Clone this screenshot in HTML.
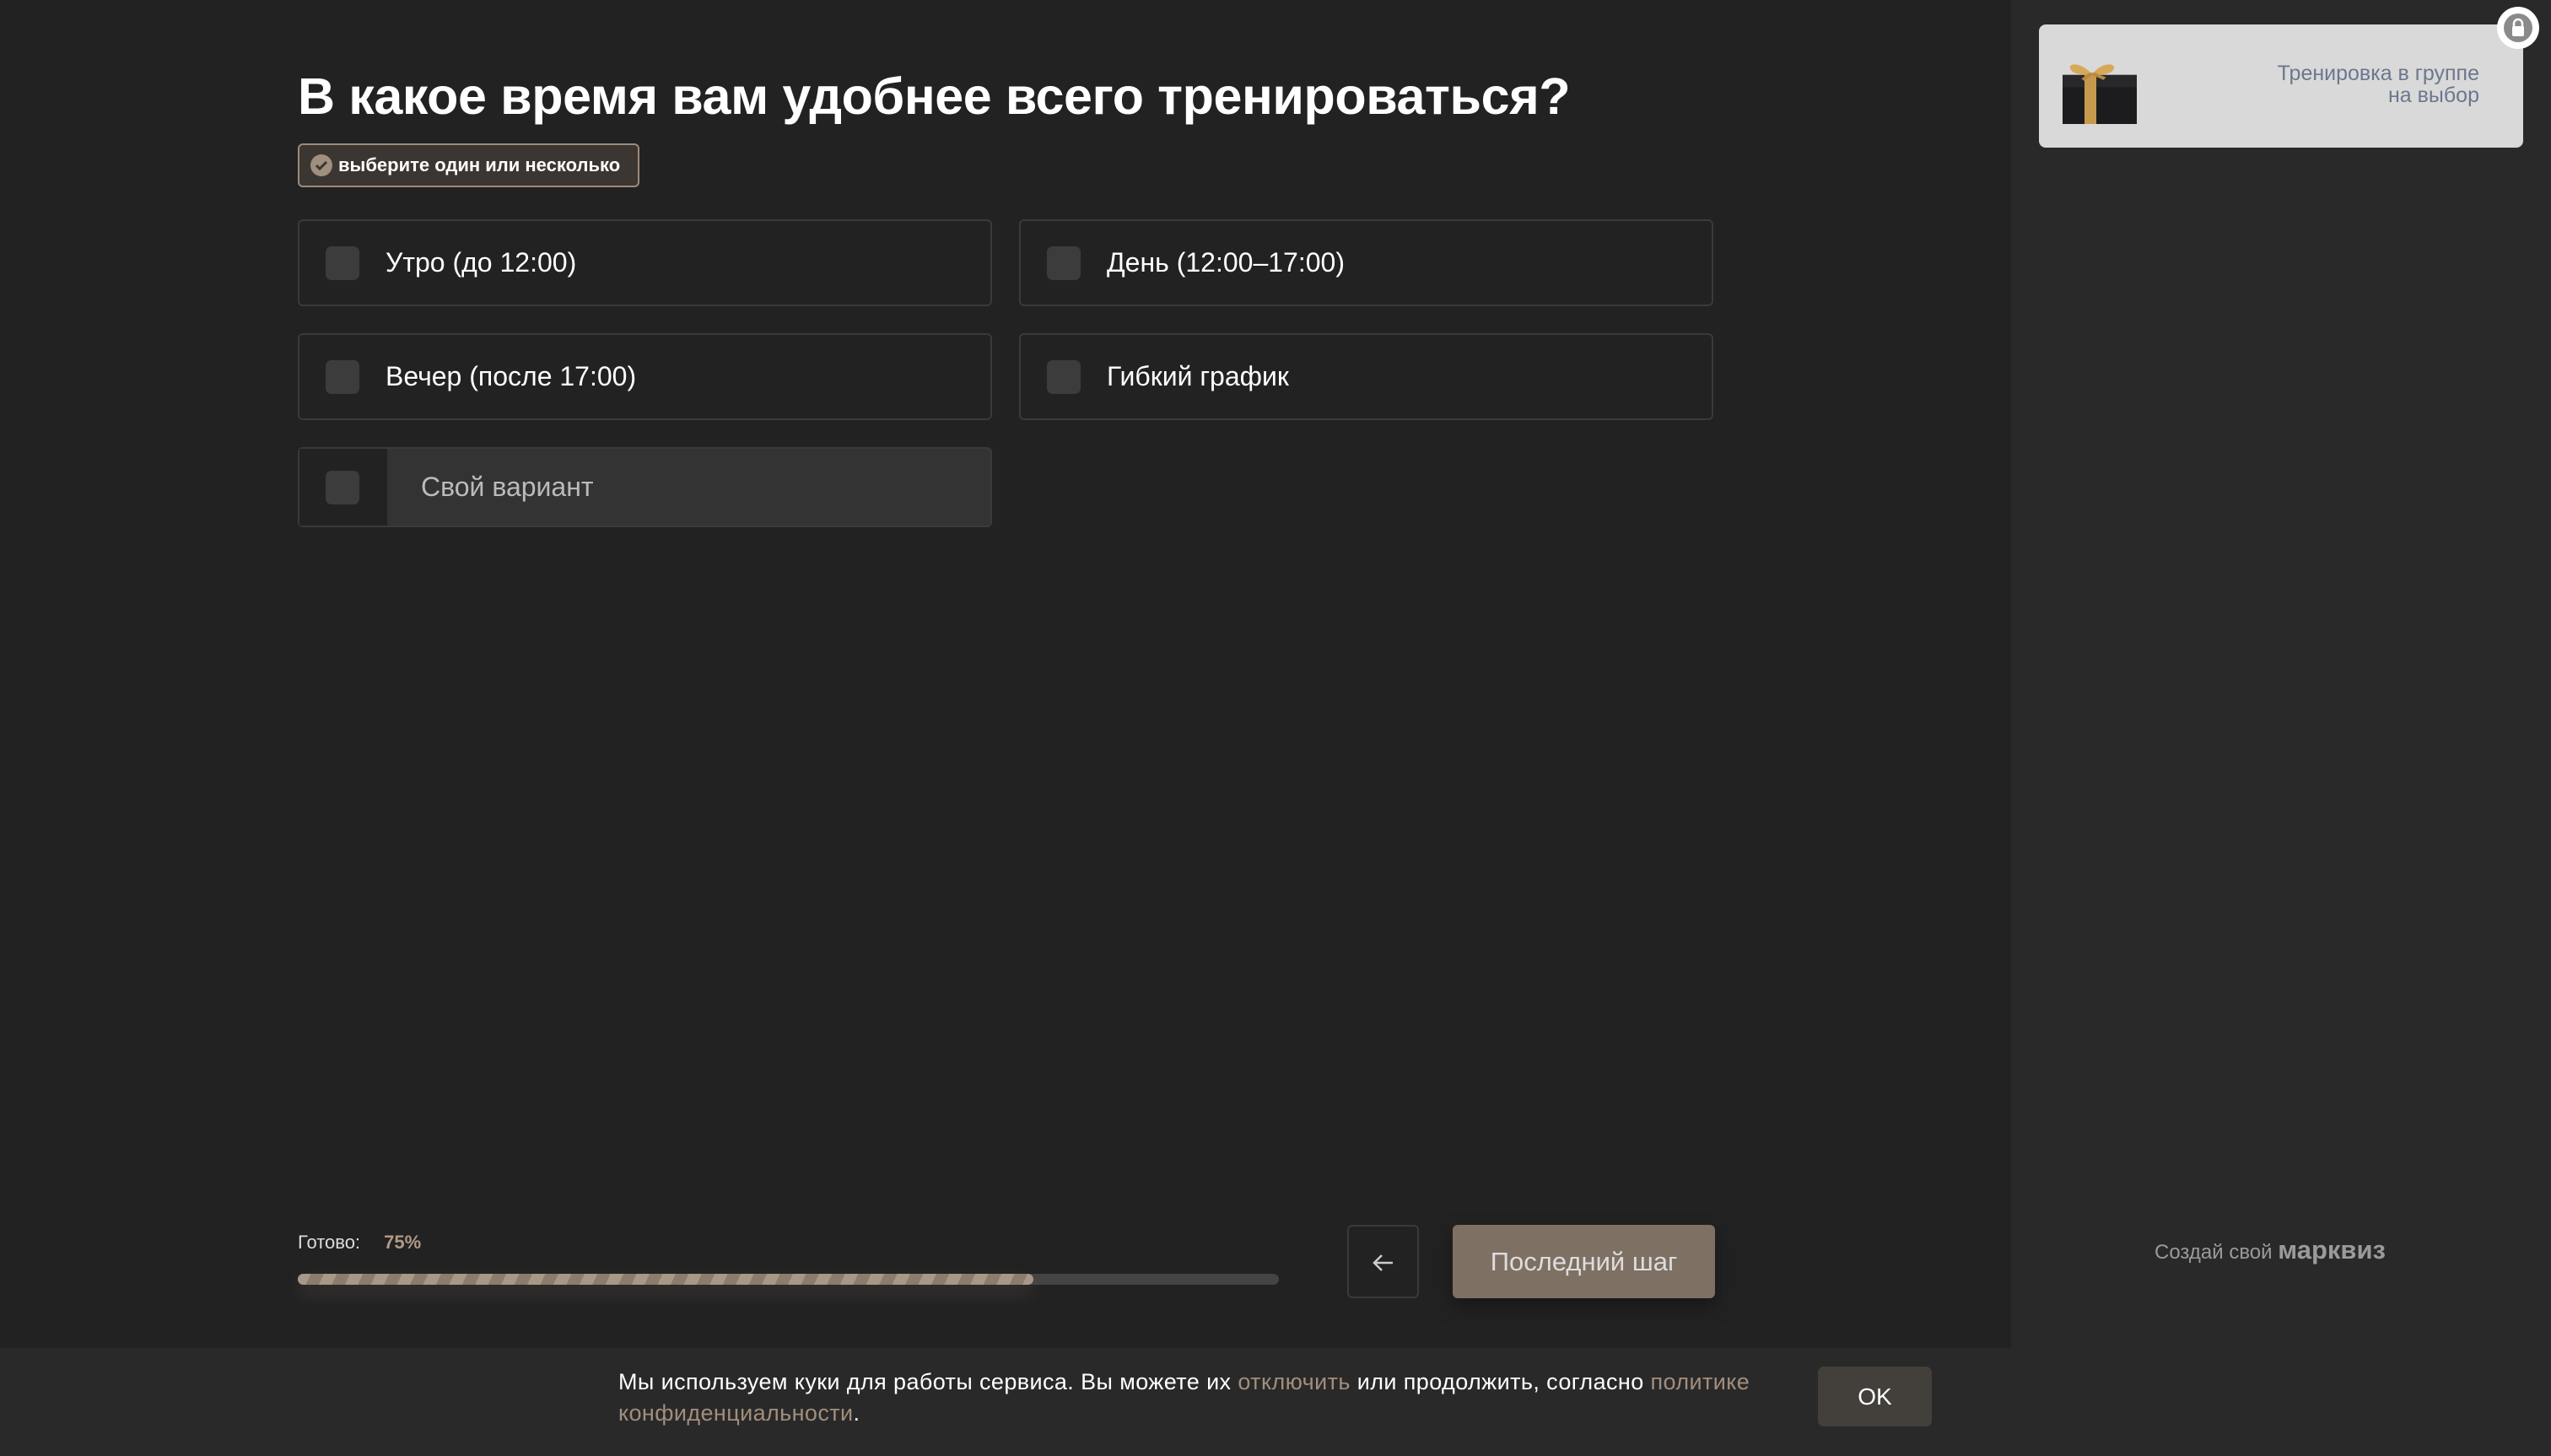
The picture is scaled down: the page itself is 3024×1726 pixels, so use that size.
<!DOCTYPE html>
<html><head><meta charset="utf-8"><style>
*{margin:0;padding:0;box-sizing:border-box}
body{width:3024px;height:1726px;overflow:hidden;background:#222;font-family:"Liberation Sans","DejaVu Sans",sans-serif;color:#fff;position:relative}
.side{position:absolute;left:2384px;top:0;width:640px;height:1726px;background:#292929}
.title{position:absolute;left:353px;top:79px;font-size:61px;font-weight:bold;letter-spacing:-0.4px;white-space:nowrap}
.badge{position:absolute;left:353px;top:170px;width:405px;height:52px;border:2px solid #9c8a7a;border-radius:6px;background:#3b3632;font-size:22px;font-weight:bold;line-height:48px;padding-left:46px;white-space:nowrap}
.badge i{position:absolute;left:13px;top:11px;width:26px;height:26px;border-radius:50%;background:#a08e7e}
.badge i svg{position:absolute;left:0;top:0}
.opt{position:absolute;width:823px;height:103px;border:2px solid #3a3a3a;border-radius:6px;background:#222;font-size:32px;line-height:99px;padding-left:102px;white-space:nowrap}
.opt b{position:absolute;left:31px;top:30px;width:40px;height:40px;border-radius:7px;background:#3c3c3c}
.own{background:#333;color:#bbb;padding-left:144px;height:95px;line-height:91px}
.own s{position:absolute;left:0;top:0;width:104px;height:91px;background:#222}
.own b{top:26px}
.ready{position:absolute;left:353px;top:1460px;font-size:22px;color:#ddd}
.ready span{color:#b09a86;margin-left:22px;font-weight:bold}
.track{position:absolute;left:353px;top:1510px;width:1163px;height:13px;border-radius:7px;background:#444}
.fill{position:absolute;left:353px;top:1510px;width:872px;height:13px;border-radius:7px;background:repeating-linear-gradient(115deg,#a89888 0 14px,#8c7c6e 14px 28px);box-shadow:0 10px 20px rgba(160,140,120,.2)}
.back{position:absolute;left:1597px;top:1452px;width:85px;height:87px;border:2px solid #3a3a3a;border-radius:6px;color:#ccc;font-size:34px;text-align:center;line-height:82px}
.next{position:absolute;left:1722px;top:1452px;width:311px;height:87px;border-radius:6px;background:#7f7064;color:#ddd;font-size:31px;text-align:center;line-height:87px;box-shadow:0 10px 24px rgba(0,0,0,.35)}
.cookie{position:absolute;left:0;top:1598px;width:3024px;height:128px;background:#292929}
.ctext{position:absolute;left:733px;top:1620px;width:1400px;font-size:27px;letter-spacing:0.4px;line-height:37px;color:#fff}
.ctext a{color:#a28e7c;text-decoration:none}
.ok{position:absolute;left:2155px;top:1620px;width:135px;height:71px;border-radius:7px;background:#433f3a;font-size:28px;text-align:center;line-height:71px}
.card{position:absolute;left:2417px;top:29px;width:574px;height:146px;border-radius:8px;background:#d9d9d9}
.card .t{position:absolute;right:52px;top:45px;text-align:right;color:#6c778e;font-size:25px;line-height:26px}
.lock{position:absolute;left:2960px;top:8px;width:50px;height:50px;border-radius:50%;background:#fff}
.lock i{position:absolute;left:8px;top:8px;width:34px;height:34px;border-radius:50%;background:#8a8a8a}
.mk{position:absolute;left:2554px;top:1464px;font-size:24px;color:#9a9a9a;white-space:nowrap}
.mk b{font-size:31px;color:#9a9a9a}
</style></head><body>
<div class="side"></div>
<div class="title">В какое время вам удобнее всего тренироваться?</div>
<div class="badge"><i><svg width="26" height="26" viewBox="0 0 26 26"><path d="M7 13l4 4 8-8" stroke="#3b3632" stroke-width="3" fill="none"/></svg></i>выберите один или несколько</div>
<div class="opt" style="left:353px;top:260px"><b></b>Утро (до 12:00)</div>
<div class="opt" style="left:1208px;top:260px"><b></b>День (12:00–17:00)</div>
<div class="opt" style="left:353px;top:395px"><b></b>Вечер (после 17:00)</div>
<div class="opt" style="left:1208px;top:395px"><b></b>Гибкий график</div>
<div class="opt own" style="left:353px;top:530px"><s></s><b></b>Свой вариант</div>
<div class="ready">Готово: <span>75%</span></div>
<div class="track"></div><div class="fill"></div>
<div class="back"><svg width="30" height="24" viewBox="0 0 30 24" style="vertical-align:middle"><path d="M26 12H5M13 3l-9 9 9 9" stroke="#ccc" stroke-width="2.5" fill="none"/></svg></div>
<div class="next">Последний шаг</div>
<div class="card">
<svg style="position:absolute;left:26px;top:38px" width="92" height="80" viewBox="0 0 92 110" preserveAspectRatio="none"><rect x="2" y="30" width="88" height="80" fill="#1c1c1e"/><rect x="2" y="30" width="88" height="20" fill="#28282a"/><rect x="28" y="26" width="14" height="84" fill="#c69a4c"/><path d="M36 28C24 8 6 10 12 22c4 8 16 8 24 6zM38 28c10-20 30-18 24-6-4 8-16 8-24 6z" fill="#d6a95a"/><path d="M36 28l-10 10M38 28l14 8" stroke="#b8893e" stroke-width="5"/></svg>
<div class="t">Тренировка в группе<br>на выбор</div></div>
<div class="lock"><i><svg width="34" height="34" viewBox="0 0 34 34"><path d="M12 16v-4a5 5 0 0 1 10 0v4" stroke="#fff" stroke-width="2.5" fill="none"/><rect x="10" y="15" width="14" height="12" rx="2" fill="#fff"/></svg></i></div>
<div class="mk">Создай свой <b>марквиз</b></div>
<div class="cookie"></div>
<div class="ctext">Мы используем куки для работы сервиса. Вы можете их <a>отключить</a> или продолжить, согласно <a>политике конфиденциальности</a>.</div>
<div class="ok">OK</div>
</body></html>
